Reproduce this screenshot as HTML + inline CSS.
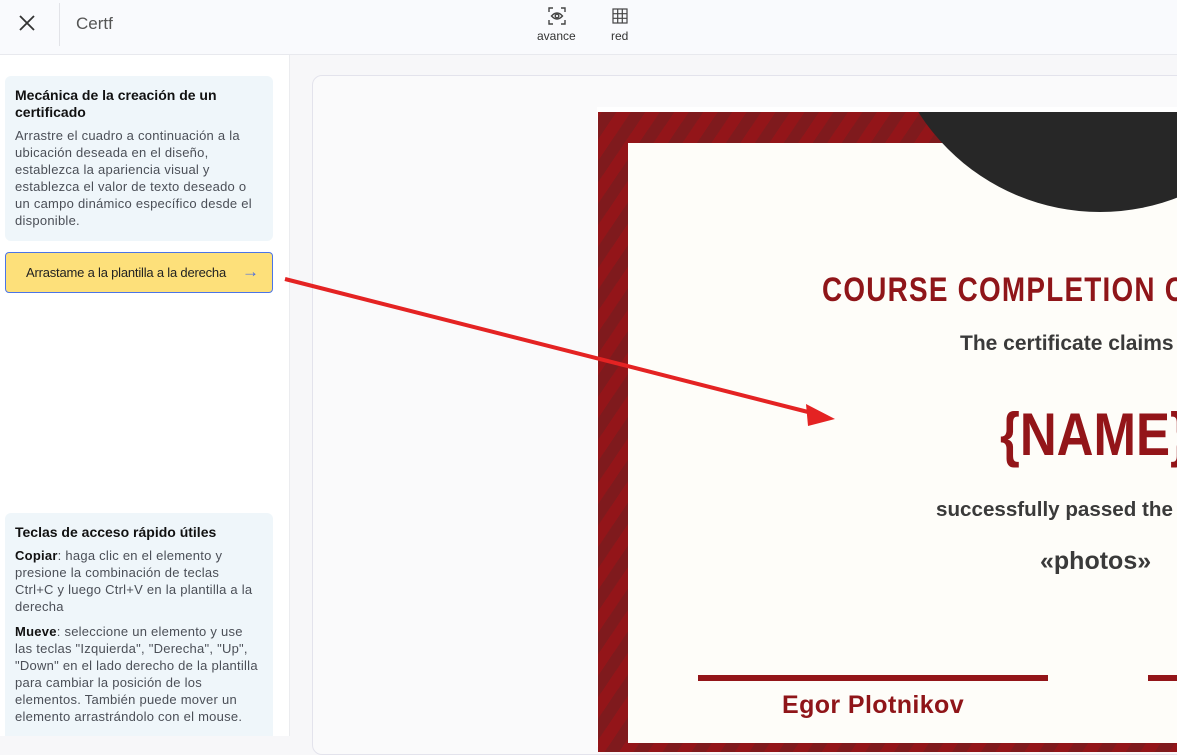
<!DOCTYPE html>
<html><head><meta charset="utf-8"><style>
*{box-sizing:border-box;margin:0;padding:0}
body{width:1177px;height:736px;overflow:hidden;font-family:"Liberation Sans",sans-serif;background:#f7f7f9;position:relative}
.hdr{position:absolute;left:0;top:0;width:1177px;height:55px;background:#f9fafd;border-bottom:1px solid #e8e9ee}
.side{position:absolute;left:0;top:55px;width:290px;height:681px;background:#fff;border-right:1px solid #ebecef;overflow:hidden}
.box{position:absolute;left:5px;width:268px;background:#eff6fa;border-radius:6px;padding:11px 14px 11px 10px;color:#4b4f57;font-size:13px;line-height:17px;letter-spacing:.25px}
.box h3{font-size:14px;color:#111;line-height:17px;margin-bottom:6px;letter-spacing:0}
.box p{margin-bottom:8px}
.box b{color:#111}
.btn{position:absolute;left:5px;width:268px;height:41px;background:#fde07a;border:1px solid #4a74e8;border-radius:4px;font-size:13px;color:#222;padding-left:20px;line-height:39px;letter-spacing:-.2px}
.panel{position:absolute;left:312px;top:75px;width:880px;height:680px;border:1px solid #e3e3ec;border-radius:10px;background:#fafafb}
.cert{position:absolute;left:597px;top:107px;width:600px;height:640px;background:#fff}
.red{position:absolute;left:598px;top:112px;width:600px;height:640px;background:repeating-linear-gradient(-56deg,#7f1a1d 0 12px,#931519 12px 24px);overflow:hidden}
.cream{position:absolute;left:628px;top:143px;width:560px;height:600px;background:#fefdf9}
.t{position:absolute;white-space:nowrap}
</style></head><body>
<div class="hdr">
<svg style="position:absolute;left:17px;top:13px" width="20" height="20" viewBox="0 0 20 20"><path d="M3 3L17 17M17 3L3 17" stroke="#333" stroke-width="1.8"/></svg>
<div style="position:absolute;left:59px;top:3px;width:1px;height:43px;background:#e2e3e8"></div>
<div class="t" style="left:76px;top:14px;font-size:17px;color:#555">Certf</div>
<svg style="position:absolute;left:548px;top:7px" width="18" height="18" viewBox="0 0 18 18" fill="none" stroke="#444" stroke-width="1.4"><path d="M1 5V1h4M13 1h4v4M17 13v4h-4M5 17H1v-4"/><path d="M3.5 9Q9 3 14.5 9Q9 15 3.5 9Z"/><circle cx="9" cy="9" r="1.8"/></svg>
<div class="t" style="left:537px;top:29px;font-size:12px;color:#333">avance</div>
<svg style="position:absolute;left:612px;top:8px" width="16" height="16" viewBox="0 0 16 16" fill="none" stroke="#444" stroke-width="1.2"><rect x="1" y="1" width="14" height="14"/><path d="M5.7 1v14M10.3 1v14M1 5.7h14M1 10.3h14"/></svg>
<div class="t" style="left:611px;top:29px;font-size:12px;color:#333">red</div>
</div>
<div class="side">
<div class="box" style="top:21px;height:165px"><h3>Mecánica de la creación de un certificado</h3><p>Arrastre el cuadro a continuación a la ubicación deseada en el diseño, establezca la apariencia visual y establezca el valor de texto deseado o un campo dinámico específico desde el disponible.</p></div>
<div class="btn" style="top:197px">Arrastame a la plantilla a la derecha<span style="position:absolute;left:236px;top:-1px;color:#4a6ee0;font-size:17px">→</span></div>
<div class="box" style="top:458px;height:260px"><h3 style="margin-bottom:6px">Teclas de acceso rápido útiles</h3><p><b>Copiar</b>: haga clic en el elemento y presione la combinación de teclas Ctrl+C y luego Ctrl+V en la plantilla a la derecha</p><p><b>Mueve</b>: seleccione un elemento y use las teclas "Izquierda", "Derecha", "Up", "Down" en el lado derecho de la plantilla para cambiar la posición de los elementos. También puede mover un elemento arrastrándolo con el mouse.</p></div>
</div>
<div class="panel"></div>
<div class="cert"></div>
<div class="red"></div>
<div class="cream"></div>
<div style="position:absolute;left:885px;top:-218px;width:430px;height:430px;border-radius:50%;background:#272727;clip-path:inset(330px 0 0 0)"></div>
<div class="t" style="left:822px;top:271px;font-size:34px;font-weight:bold;color:#8f1519;letter-spacing:1.5px;transform:scaleX(.82);transform-origin:left">COURSE COMPLETION C</div>
<div class="t" style="left:960px;top:332px;font-size:21px;font-weight:bold;color:#3a3a3a">The certificate claims</div>
<div class="t" style="left:1000px;top:400px;font-size:60px;font-weight:bold;color:#931519;transform:scaleX(.85);transform-origin:left">{NAME}</div>
<div class="t" style="left:936px;top:498px;font-size:20.6px;font-weight:bold;color:#3a3a3a">successfully passed the</div>
<div class="t" style="left:1040px;top:547px;font-size:25px;font-weight:bold;color:#3a3a3a">«photos»</div>
<div style="position:absolute;left:698px;top:675px;width:350px;height:6px;background:#931519"></div>
<div style="position:absolute;left:1148px;top:675px;width:40px;height:6px;background:#931519"></div>
<div class="t" style="left:782px;top:691px;font-size:25px;font-weight:bold;color:#8f1519;letter-spacing:.4px">Egor Plotnikov</div>
<svg style="position:absolute;left:0;top:0" width="1177" height="736"><path d="M285 279L812 413" stroke="#e42323" stroke-width="4"/><path d="M835 419L806 404L808 426Z" fill="#e42323"/></svg>
</body></html>
